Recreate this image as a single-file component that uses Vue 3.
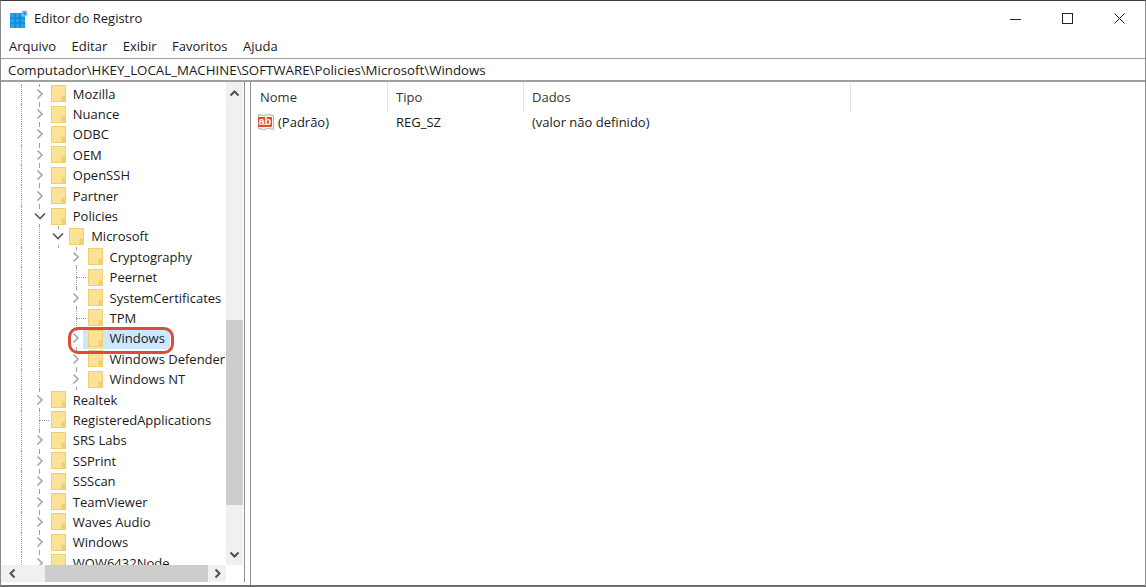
<script setup>
const rows = [
  { t: 'Mozilla', g: [1], tw: 'r' },
  { t: 'Nuance', g: [1], tw: 'r' },
  { t: 'ODBC', g: [1], tw: 'r' },
  { t: 'OEM', g: [1], tw: 'r' },
  { t: 'OpenSSH', g: [1], tw: 'r' },
  { t: 'Partner', g: [1], tw: 'r' },
  { t: 'Policies', g: [1], tw: 'd' },
  { t: 'Microsoft', g: [1, 1], tw: 'd' },
  { t: 'Cryptography', g: [1, 1, 0], tw: 'r' },
  { t: 'Peernet', g: [1, 1, 0], tw: 'l' },
  { t: 'SystemCertificates', g: [1, 1, 0], tw: 'r' },
  { t: 'TPM', g: [1, 1, 0], tw: 'l' },
  { t: 'Windows', g: [1, 1, 0], tw: 'r', sel: true },
  { t: 'Windows Defender', g: [1, 1, 0], tw: 'r' },
  { t: 'Windows NT', g: [1, 1, 0], tw: 'r' },
  { t: 'Realtek', g: [1], tw: 'r' },
  { t: 'RegisteredApplications', g: [1], tw: 'l' },
  { t: 'SRS Labs', g: [1], tw: 'r' },
  { t: 'SSPrint', g: [1], tw: 'r' },
  { t: 'SSScan', g: [1], tw: 'r' },
  { t: 'TeamViewer', g: [1], tw: 'r' },
  { t: 'Waves Audio', g: [1], tw: 'r' },
  { t: 'Windows', g: [1], tw: 'r' },
  { t: 'WOW6432Node', g: [1], tw: 'r' }
]
const menus = ['Arquivo', 'Editar', 'Exibir', 'Favoritos', 'Ajuda']
const cols = [
  { t: 'Nome', w: 136 },
  { t: 'Tipo', w: 136 },
  { t: 'Dados', w: 327 }
]
</script>

<template>
  <div class="win">
    <header class="title">
      <svg class="appicon" width="18" height="18" viewBox="0 0 18 18">
        <rect x="0" y="3" width="15" height="15" fill="#22a4ea" />
        <path d="M5 3v15M10 3v15M0 8h15M0 13h15" stroke="#0f7cc4" stroke-width="1" />
        <circle cx="14.500" cy="3.500" r="3.200" fill="#7cc8ef" />
        <circle cx="14.500" cy="3.500" r="1.500" fill="#1c8fd6" />
      </svg>
      <span class="title-text">Editor do Registro</span>
      <div class="controls">
        <svg width="11" height="11" viewBox="0 0 11 11"><path d="M0 6.500h11" stroke="#222" fill="none" /></svg>
        <svg width="11" height="11" viewBox="0 0 11 11"><rect x=".5" y=".5" width="10" height="10" stroke="#222" fill="none" /></svg>
        <svg width="11" height="11" viewBox="0 0 11 11"><path d="M.5.5l10 10M10.500.5l-10 10" stroke="#222" fill="none" /></svg>
      </div>
    </header>

    <nav class="menu">
      <span v-for="m in menus" :key="m">{{ m }}</span>
    </nav>

    <div class="address">Computador\HKEY_LOCAL_MACHINE\SOFTWARE\Policies\Microsoft\Windows</div>

    <main class="panes">
      <aside class="tree-pane">
        <div class="tree-top">
          <div class="tree">
            <div v-for="(r, i) in rows" :key="i" class="row">
              <span v-for="(on, k) in r.g" :key="k" class="cell" :class="{ guide: on }"></span>
              <span class="cell tw" :class="r.tw === 'l' ? 'leaf' : 'twisty'">
                <svg v-if="r.tw === 'r'" width="8" height="12" viewBox="0 0 8 12">
                  <path d="M1.500 1.500l4.500 4.500-4.500 4.500" stroke="#a6a6a6" stroke-width="1.600" fill="none" />
                </svg>
                <svg v-else-if="r.tw === 'd'" width="12" height="8" viewBox="0 0 12 8">
                  <path d="M1 1.500l5 5 5-5" stroke="#555" stroke-width="1.600" fill="none" />
                </svg>
              </span>
              <span class="item" :class="{ sel: r.sel }">
                <svg class="folder" width="15" height="17" viewBox="0 0 15 17">
                  <rect x=".5" y=".5" width="14" height="16" fill="#fce296" stroke="#f1cf6d" />
                  <rect x="10.500" y="10.500" width="4" height="6" fill="#f1cf6d" />
                </svg>
                <span class="label">{{ r.t }}</span>
              </span>
            </div>
          </div>
          <div class="vscroll">
            <svg class="arrow" width="17" height="17" viewBox="0 0 17 17"><path d="M4.500 10.500l4-4 4 4" stroke="#505050" stroke-width="2" fill="none" /></svg>
            <div class="v-track"><div class="v-thumb"></div></div>
            <svg class="arrow" width="17" height="17" viewBox="0 0 17 17"><path d="M4.500 6.500l4 4 4-4" stroke="#505050" stroke-width="2" fill="none" /></svg>
          </div>
          <div class="gap"></div>
        </div>
        <div class="hscroll">
          <svg class="arrow" width="17" height="17" viewBox="0 0 17 17"><path d="M10.500 4.500l-4 4 4 4" stroke="#505050" stroke-width="2" fill="none" /></svg>
          <div class="h-track"><div class="h-thumb"></div></div>
          <svg class="arrow" width="17" height="17" viewBox="0 0 17 17"><path d="M6.500 4.500l4 4-4 4" stroke="#505050" stroke-width="2" fill="none" /></svg>
        </div>
      </aside>

      <section class="list">
        <div class="list-head">
          <span v-for="c in cols" :key="c.t" class="col" :style="{ width: c.w + 'px' }">{{ c.t }}</span>
        </div>
        <div class="list-row">
          <span class="c1">
            <svg width="18" height="18" viewBox="0 0 18 18">
              <path d="M1.500 1.500l5 1 5-1 5 1v14l-5-1-5 1-5-1z" fill="#f6f4f0" stroke="#b5b0a8" />
              <rect x="1" y="4" width="14" height="10" rx="1" fill="#e0492c" />
              <text x="1.500" y="12" class="ab">ab</text>
            </svg>
            <span>(Padrão)</span>
          </span>
          <span class="c2">REG_SZ</span>
          <span class="c3">(valor não definido)</span>
        </div>
      </section>

      <div class="callout"></div>
    </main>
  </div>
</template>

<style>
html, body { margin: 0; background: #fff; overflow: hidden; }
</style>

<style scoped>
.win {
  width: 1146px;
  height: 587px;
  box-sizing: border-box;
  display: flex;
  flex-direction: column;
  background: #fff;
  border-top: 1px solid #3a3a3a;
  border-left: 1px solid #8a8a8a;
  border-right: 1px solid #8a8a8a;
  border-bottom: 2px solid #6e6e6e;
  font-family: "Open Sans", "Noto Sans", sans-serif;
  font-size: 13px;
  color: #1a1a1a;
  overflow: hidden;
}
.title {
  height: 35px;
  flex: none;
  display: flex;
  align-items: center;
  padding-left: 9px;
}
.title-text { margin-left: 6px; position: relative; top: -1px; }
.controls {
  margin-left: auto;
  display: flex;
  gap: 41px;
  padding-right: 20px;
}
.menu {
  height: 20px;
  flex: none;
  display: flex;
  gap: 15.500px;
  align-items: center;
  padding: 0 0 2px 8px;
}
.address {
  height: 21px;
  flex: none;
  display: flex;
  align-items: center;
  padding-left: 7px;
  font-size: 13.300px;
  border-top: 1px solid #a0a0a0;
  border-bottom: 2px solid #a0a0a0;
  white-space: nowrap;
}
.panes {
  position: relative;
  flex: 1;
  min-height: 0;
  display: flex;
  padding-bottom: 3px;
}
.tree-pane {
  width: 243px;
  flex: none;
  display: flex;
  flex-direction: column;
  border-right: 1px solid #8f8f8f;
}
.tree-top { flex: 1; min-height: 0; display: flex; }
.tree { flex: 1; min-width: 0; overflow: hidden; padding: 1.500px 0 0 11px; }
.row {
  height: 20.4px;
  display: flex;
  align-items: center;
  white-space: nowrap;
}
.cell {
  width: 18.4px;
  height: 100%;
  flex: none;
  position: relative;
  display: flex;
  align-items: center;
  justify-content: center;
}
.guide::before {
  content: "";
  position: absolute;
  left: 9px;
  top: 0;
  bottom: 0;
  border-left: 1px dotted #a0a0a0;
}
.leaf::before {
  content: "";
  position: absolute;
  left: 9px;
  top: 0;
  bottom: 0;
  border-left: 1px dotted #a0a0a0;
}
.leaf::after {
  content: "";
  position: absolute;
  left: 9px;
  top: 50%;
  width: 10px;
  border-top: 1px dotted #a0a0a0;
}
.twisty::before,
.twisty::after {
  content: "";
  position: absolute;
  left: 9px;
  height: 2px;
  border-left: 1px dotted #a0a0a0;
}
.twisty::before { top: 0; }
.twisty::after { bottom: 0; }
.item {
  display: flex;
  align-items: center;
  height: 100%;
  padding-left: 2px;
}
.item.sel {
  background: #cce8ff;
  margin-left: -3px;
  padding-left: 5px;
  padding-right: 5px;
}
.folder { flex: none; }
.label { margin-left: 7px; }
.vscroll {
  width: 17px;
  flex: none;
  display: flex;
  flex-direction: column;
  box-sizing: border-box;
  padding: 3px 0 2px;
  background: #f0f0f0;
}
.gap { width: 1px; flex: none; }
.arrow { flex: none; display: block; }
.v-track { flex: 1; padding-top: 218px; padding-bottom: 41px; display: flex; }
.v-thumb { flex: 1; background: #cdcdcd; }
.hscroll {
  height: 17px;
  flex: none;
  display: flex;
  background: #f0f0f0;
  margin-right: 18px;
  padding-left: 3px;
}
.h-track { flex: 1; padding-left: 24px; padding-right: 1px; display: flex; }
.h-thumb { flex: 1; background: #cdcdcd; }
.list {
  flex: 1;
  min-width: 0;
  margin-left: 5px;
  margin-bottom: -3px;
  border-left: 1px solid #8f8f8f;
}
.list-head {
  height: 30px;
  display: flex;
  padding-left: 1px;
}
.col {
  box-sizing: border-box;
  padding-left: 8px;
  display: flex;
  align-items: center;
  border-right: 1px solid #e5e5e5;
  color: #333;
}
.list-row {
  height: 20px;
  display: flex;
  align-items: center;
}
.c1 { width: 137px; box-sizing: border-box; padding-left: 6px; display: flex; align-items: center; gap: 3px; }
.c2 { width: 136px; box-sizing: border-box; padding-left: 8px; }
.c3 { padding-left: 8px; }
.ab { font: 700 11px "Liberation Sans", sans-serif; fill: #fff; }
.callout {
  position: absolute;
  left: 67px;
  top: 245px;
  width: 106px;
  height: 27px;
  box-sizing: border-box;
  border: 3px solid #dc4b3c;
  border-radius: 10px;
}
</style>
